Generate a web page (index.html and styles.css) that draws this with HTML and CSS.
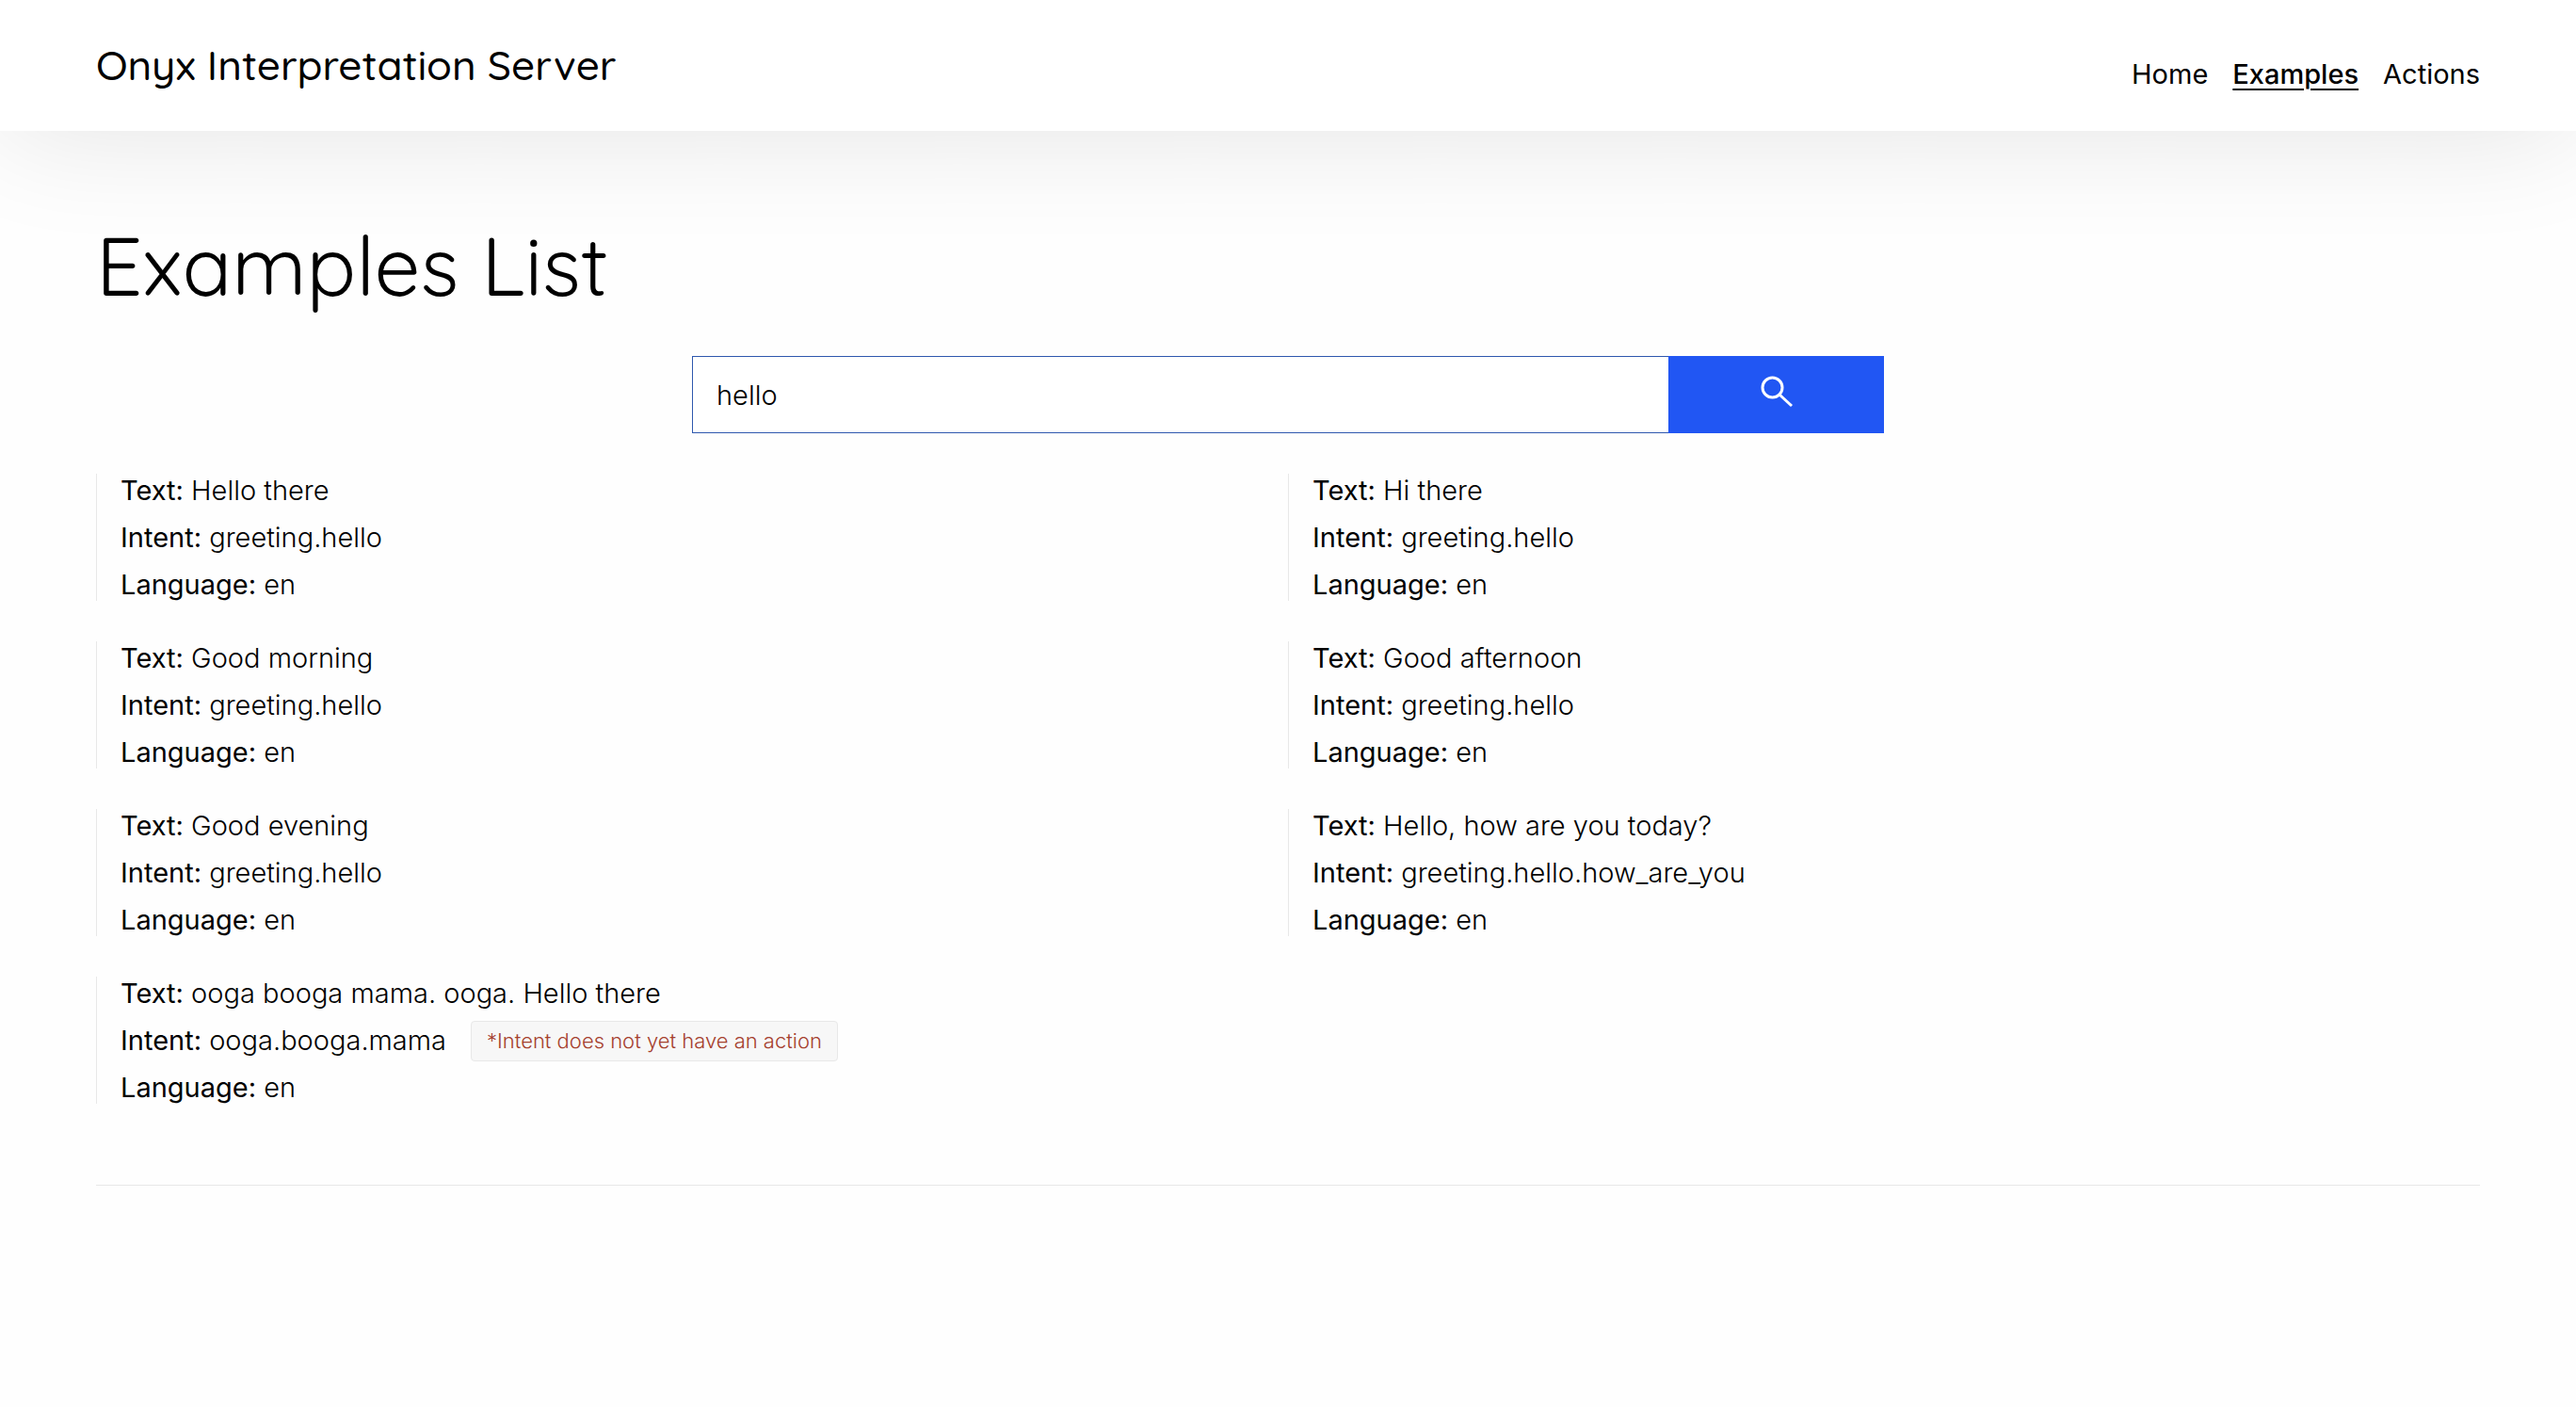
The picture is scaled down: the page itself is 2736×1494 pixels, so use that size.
FILE: index.html
```html
<!DOCTYPE html>
<html lang="en">
<head>
<meta charset="utf-8">
<meta name="viewport" content="width=device-width, initial-scale=1">
<title>Examples List</title>
<link rel="stylesheet" href="styles.css">
</head>
<body>
<header class="header">
  <a class="brand" href="#">Onyx Interpretation Server</a>
  <nav class="nav">
    <a href="#">Home</a>
    <a class="active" href="#" aria-current="page">Examples</a>
    <a href="#">Actions</a>
  </nav>
</header>
<main class="main">
  <h1 class="title">Examples List</h1>
  <form class="search">
    <input class="search-input" type="text" name="q" value="hello" aria-label="Search examples">
    <button class="search-button" type="submit" aria-label="Search">
      <svg class="search-icon" viewBox="0 0 34 34" fill="none" stroke="currentColor" stroke-width="3"><circle cx="12.5" cy="12.5" r="10.5"/><path d="M20 20L33 32"/></svg>
    </button>
  </form>
  <ul class="examples">
    <li class="example">
      <p><b>Text:</b> Hello there</p>
      <p><b>Intent:</b> greeting.hello</p>
      <p><b>Language:</b> en</p>
    </li>
    <li class="example">
      <p><b>Text:</b> Hi there</p>
      <p><b>Intent:</b> greeting.hello</p>
      <p><b>Language:</b> en</p>
    </li>
    <li class="example">
      <p><b>Text:</b> Good morning</p>
      <p><b>Intent:</b> greeting.hello</p>
      <p><b>Language:</b> en</p>
    </li>
    <li class="example">
      <p><b>Text:</b> Good afternoon</p>
      <p><b>Intent:</b> greeting.hello</p>
      <p><b>Language:</b> en</p>
    </li>
    <li class="example">
      <p><b>Text:</b> Good evening</p>
      <p><b>Intent:</b> greeting.hello</p>
      <p><b>Language:</b> en</p>
    </li>
    <li class="example">
      <p><b>Text:</b> Hello, how are you today?</p>
      <p><b>Intent:</b> greeting.hello.how_are_you</p>
      <p><b>Language:</b> en</p>
    </li>
    <li class="example">
      <p><b>Text:</b> ooga booga mama. ooga. Hello there</p>
      <p class="flagged"><span><b>Intent:</b> ooga.booga.mama</span> <span class="note">*Intent does not yet have an action</span></p>
      <p><b>Language:</b> en</p>
    </li>
  </ul>
  <hr class="rule">
</main>
</body>
</html>
```
FILE: styles.css
```css
* {
  box-sizing: border-box;
  margin: 0;
  padding: 0;
}

body {
  background: #fefefe;
  color: #000;
  font-family: Inter, "Liberation Sans", sans-serif;
  font-size: 29px;
  font-weight: 300;
  line-height: 35px;
}

.header {
  position: relative;
  display: flex;
  justify-content: space-between;
  align-items: flex-start;
  padding: 37px 102px 38px;
  background: #fff;
  box-shadow: 0 0 128px rgba(0, 0, 0, 0.11);
}

.brand {
  color: inherit;
  text-decoration: none;
  font-family: Quicksand, Lato, sans-serif;
  font-size: 44px;
  font-weight: 500;
  line-height: 64px;
}

.nav {
  display: flex;
  gap: 26px;
  padding-top: 24px;
  font-weight: 400;
}

.nav a {
  color: inherit;
  text-decoration: none;
}

.nav .active {
  font-weight: 500;
  text-decoration: underline;
  text-decoration-thickness: 2px;
  text-underline-offset: 5px;
}

.main {
  padding: 88px 102px;
}

.title {
  font-family: Quicksand, Lato, sans-serif;
  font-size: 87px;
  font-weight: 400;
  line-height: 110px;
}

.search {
  display: flex;
  width: 50%;
  height: 82px;
  margin: 41px auto 43px;
}

.search-input {
  flex: 1;
  min-width: 0;
  padding: 0 25px;
  border: 1px solid #2f58ae;
  border-right: 0;
  border-radius: 0;
  background: #fff;
  color: inherit;
  font: inherit;
}

.search-button {
  display: flex;
  justify-content: center;
  width: 229px;
  padding-top: 21px;
  border: 0;
  background: #2156f3;
  color: #fff;
}

.search-icon {
  width: 34px;
  height: 34px;
}

.examples {
  display: grid;
  grid-template-columns: 1fr 1fr;
  row-gap: 43px;
  list-style: none;
}

.example {
  display: flex;
  flex-direction: column;
  gap: 15px;
  padding-left: 25px;
  border-left: 1px solid #e8e8e8;
}

.example b {
  font-weight: 400;
}

.flagged {
  display: flex;
  align-items: center;
  gap: 26px;
}

.note {
  margin: -3px 0 -5px;
  padding: 0 16px;
  border: 1px solid #e8e8e8;
  border-radius: 4px;
  background: #f7f7f7;
  color: #a5402d;
  font-size: 22px;
  line-height: 41px;
}

.rule {
  margin-top: 86px;
  border: 0;
  border-top: 1px solid #e8e8e8;
}
```
